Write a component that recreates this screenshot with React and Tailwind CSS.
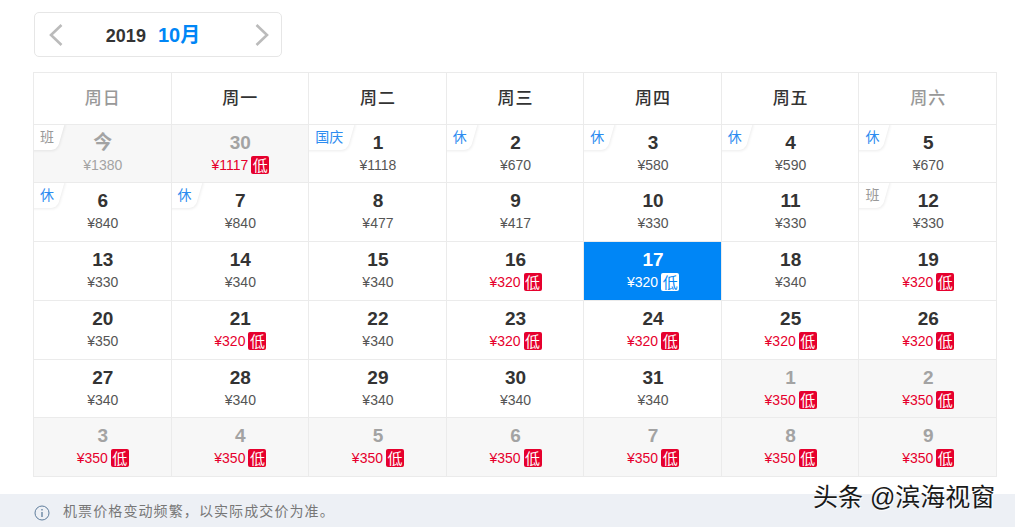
const WEEK = [
  { label: "周日", off: true },
  { label: "周一" },
  { label: "周二" },
  { label: "周三" },
  { label: "周四" },
  { label: "周五" },
  { label: "周六", off: true },
];

// d: day, p: price, low: lowest badge, out: other month, tag: corner label
const DAYS = [
  { d: "今", p: 1380, out: true, tag: "班", plain: true },
  { d: 30, p: 1117, out: true, low: true },
  { d: 1, p: 1118, tag: "国庆" },
  { d: 2, p: 670, tag: "休" },
  { d: 3, p: 580, tag: "休" },
  { d: 4, p: 590, tag: "休" },
  { d: 5, p: 670, tag: "休" },
  { d: 6, p: 840, tag: "休" },
  { d: 7, p: 840, tag: "休" },
  { d: 8, p: 477 },
  { d: 9, p: 417 },
  { d: 10, p: 330 },
  { d: 11, p: 330 },
  { d: 12, p: 330, tag: "班" },
  { d: 13, p: 330 },
  { d: 14, p: 340 },
  { d: 15, p: 340 },
  { d: 16, p: 320, low: true },
  { d: 17, p: 320, low: true, active: true },
  { d: 18, p: 340 },
  { d: 19, p: 320, low: true },
  { d: 20, p: 350 },
  { d: 21, p: 320, low: true },
  { d: 22, p: 340 },
  { d: 23, p: 320, low: true },
  { d: 24, p: 320, low: true },
  { d: 25, p: 320, low: true },
  { d: 26, p: 320, low: true },
  { d: 27, p: 340 },
  { d: 28, p: 340 },
  { d: 29, p: 340 },
  { d: 30, p: 340 },
  { d: 31, p: 340 },
  { d: 1, p: 350, out: true, low: true },
  { d: 2, p: 350, out: true, low: true },
  { d: 3, p: 350, out: true, low: true },
  { d: 4, p: 350, out: true, low: true },
  { d: 5, p: 350, out: true, low: true },
  { d: 6, p: 350, out: true, low: true },
  { d: 7, p: 350, out: true, low: true },
  { d: 8, p: 350, out: true, low: true },
  { d: 9, p: 350, out: true, low: true },
];

function Tag({ text }) {
  const work = text === "班";
  return (
    <div className="absolute left-0 top-0 h-[25px]">
      <div
        className={`absolute top-[-2px] left-[-8px] h-[27px] -skew-x-[16deg] rounded-br-[6px] bg-white shadow-[1px_1px_3px_rgba(0,0,0,0.08)] ${
          text.length > 1 ? "w-[50px]" : "w-[35px]"
        }`}
      ></div>
      <span
        className={`relative block pl-[6px] pt-[4px] text-[14px] leading-[17px] whitespace-nowrap ${
          work ? "text-[#999999]" : "text-[#2d8cf0]"
        }`}
      >
        {text}
      </span>
    </div>
  );
}

function Cell({ item }) {
  const { d, p, low, out, active, tag } = item;
  let bg = "bg-white";
  if (out) bg = "bg-[#f7f7f7]";
  if (active) bg = "bg-[#0086f6]";

  let numColor = "text-[#333333]";
  if (out) numColor = "text-[#a3a3a3]";
  if (active) numColor = "text-white";

  let priceColor = "text-[#555555]";
  if (low) priceColor = "text-[#e6002d]";
  if (item.plain) priceColor = "text-[#a3a3a3]";
  if (active) priceColor = "text-white";

  return (
    <div
      className={`relative flex flex-col items-center overflow-hidden border-r border-b border-[#ebebeb] pl-[1px] pt-[6px] ${bg}`}
    >
      {tag && <Tag text={tag} />}
      <div className={`text-[19px] font-bold leading-[24px] ${numColor}`}>{d}</div>
      <div className="mt-[1px] flex h-[18px] items-center">
        <span className={`text-[14px] leading-[18px] ${priceColor}`}>¥{p}</span>
        {low && (
          <span
            className={`ml-[3px] flex h-[18px] w-[18px] items-center justify-center rounded-[2px] text-[15px] leading-none ${
              active ? "bg-white text-[#0086f6]" : "bg-[#e6002d] text-white"
            }`}
          >
            低
          </span>
        )}
      </div>
    </div>
  );
}

function Arrow({ points }) {
  return (
    <svg width="14" height="22" viewBox="0 0 14 22" fill="none">
      <path d={points} stroke="#bbbbbb" strokeWidth="2.6" />
    </svg>
  );
}

export default function App() {
  return (
    <div className="relative h-[527px] w-[1015px] overflow-hidden bg-white font-['Liberation_Sans','Noto_Sans_CJK_SC',sans-serif]">
      <div className="pl-[34px] pt-[12px]">
        <div className="flex h-[45px] w-[248px] items-center justify-between rounded-[5px] border border-[#e6e6e6] pl-[14px] pr-[12px]">
          <Arrow points="M12.5 1 L2 11 L12.5 21" />
          <div className="flex items-baseline gap-[12px] pr-[12px]">
            <span className="text-[18px] font-bold text-[#333333]">2019</span>
            <span className="text-[20px] font-bold text-[#0086f6]">10月</span>
          </div>
          <Arrow points="M1.5 1 L12 11 L1.5 21" />
        </div>
      </div>

      <div className="ml-[33px] mt-[15px] w-[964px] border-l border-t border-[#ebebeb]">
        <div className="grid h-[52px] grid-cols-7">
          {WEEK.map((w) => (
            <div
              key={w.label}
              className={`flex items-center justify-center border-r border-b border-[#ebebeb] pb-[3px] pl-[1px] font-['Noto_Sans_CJK_SC',serif] text-[17px] font-medium tracking-[1px] ${
                w.off ? "text-[#999999]" : "text-[#333333]"
              }`}
            >
              {w.label}
            </div>
          ))}
        </div>
        <div className="grid h-[352px] grid-cols-7 grid-rows-[58px_59px_59px_59px_58px_59px]">
          {DAYS.map((item, i) => (
            <Cell key={i} item={item} />
          ))}
        </div>
      </div>

      <div className="mt-[17px] flex h-[33px] items-center bg-[#edf0f5] pl-[34px]">
        <svg width="16" height="16" viewBox="0 0 16 16" fill="none" className="mt-[5px]">
          <circle cx="8" cy="8" r="7" stroke="#5f7d9c" strokeWidth="1" />
          <path d="M8 7v5M8 4v1.5" stroke="#5f7d9c" strokeWidth="1.3" />
        </svg>
        <span className="ml-[13px] mt-[2px] text-[14px] tracking-[1.1px] text-[#777777]">
          机票价格变动频繁，以实际成交价为准。
        </span>
      </div>

      <div className="absolute left-[813px] top-[482px] whitespace-nowrap text-[25px] leading-[30px] text-[#1a1a1a] [text-shadow:1px_1px_1px_#ffffff]">
        头条 @滨海视窗
      </div>
    </div>
  );
}
